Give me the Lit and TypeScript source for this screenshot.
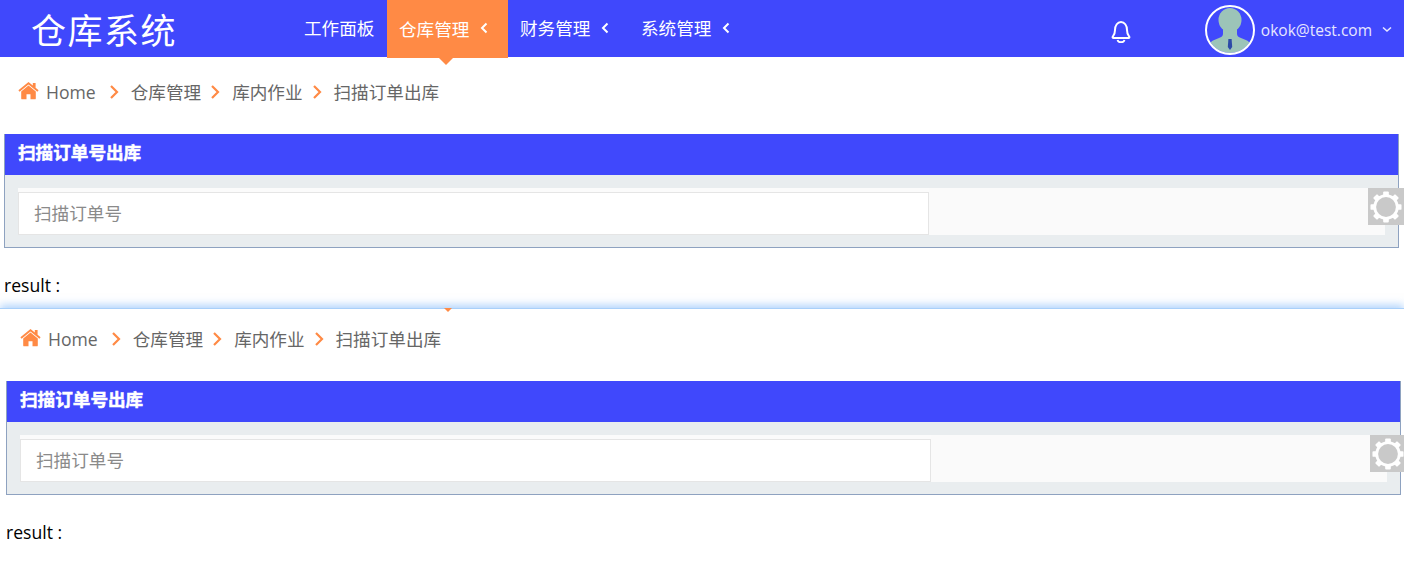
import { LitElement, html, css, svg } from "lit";
import { customElement } from "lit/decorators.js";

const chevronRight = html`<svg class="crumb-sep" viewBox="0 0 10 16" width="10" height="16"><path d="M2 2l6 6-6 6" fill="none" stroke="#ff8a45" stroke-width="2.2"/></svg>`;

const gearTeeth = (() => {
  const teeth = [];
  for (let i = 0; i < 8; i++) {
    teeth.push(svg`<rect x="14" y="0.500" width="6" height="7" rx="1" fill="#fff" transform="rotate(${i * 45} 17 17)"/>`);
  }
  return teeth;
})();

@customElement("page-content")
export class PageContent extends LitElement {
  static styles = css`
    :host { display: block; padding-left: 4px; font-family: "Open Sans", "Noto Sans CJK SC", sans-serif; }
    .crumbs { display: flex; align-items: center; height: 70px; margin-bottom: 7px; padding-left: 14px; font-size: 17.6px; color: #666; }
    .home { margin-right: 7px; margin-top: -2px; }
    .crumbs .t { line-height: 24px; }
    .crumb-sep { margin: 0 12px 0 9px; }
    .crumb-sep.s0 { margin: 0 12px 0 13px; }
    .panel { margin-right: 5px; border: 1px solid #8ea2c0; border-top: 0; background: #e9edef; }
    .head { height: 41px; background: #4048fc; color: #fff; font-size: 17.6px; font-weight: 700; -webkit-text-stroke: 0.5px #fff; line-height: 36px; padding-left: 13px; }
    .body { padding: 13px 13px 12px; }
    .row { position: relative; background: #fafafa; padding-top: 4px; height: 43px; }
    .row::before { content: ""; position: absolute; left: 0; top: 0; width: 66.67%; height: 4px; background: #fbfbfb; }
    .input { box-sizing: border-box; width: 66.67%; height: 43px; background: #fff; border: 1px solid #e5e5e5; padding-left: 15px; font-size: 17.6px; line-height: 41px; color: #8a8a8a; }
    .gear { position: absolute; right: -19px; top: 0; width: 36px; height: 37px; background: #c9c9c9; display: flex; align-items: center; justify-content: center; }
    .result { margin-top: 25px; height: 24px; font-size: 17.6px; line-height: 24px; color: #000; }
  `;
  render() {
    return html`
      <div class="crumbs">
        <svg class="home" width="21" height="18" viewBox="0 0 21 18"><path fill="#ff8a45" d="M10.5 3.6 3.2 9.6V16.4c0 .5.4.9.9.9h4.4v-5h4v5h4.4c.5 0 .9-.4.9-.9V9.6z"/><path fill="#ff8a45" d="M20.6 8.3 17.6 5.8V1h-2.8v2.5L10.5 0 .4 8.3l1.2 1.5 8.9-7.3 8.9 7.3z"/></svg>
        <span class="t">Home</span>
        <svg class="crumb-sep s0" viewBox="0 0 10 16" width="10" height="16"><path d="M2 2l6 6-6 6" fill="none" stroke="#ff8a45" stroke-width="2.2"/></svg>
        <span class="t">仓库管理</span>
        ${chevronRight}
        <span class="t">库内作业</span>
        ${chevronRight}
        <span class="t">扫描订单出库</span>
      </div>
      <div class="panel">
        <div class="head">扫描订单号出库</div>
        <div class="body">
          <div class="row">
            <div class="input">扫描订单号</div>
            <div class="gear">
              <svg width="32" height="32" viewBox="0 0 34 34">
                ${gearTeeth}
                <circle cx="17" cy="17" r="13.500" fill="#fff"/>
                <circle cx="17" cy="17" r="10.500" fill="#c9c9c9"/>
              </svg>
            </div>
          </div>
        </div>
      </div>
      <div class="result">result :</div>
    `;
  }
}

@customElement("app-root")
export class AppRoot extends LitElement {
  static styles = css`
    :host { display: block; height: 585px; overflow: hidden; position: relative; background: #fff; font-family: "Open Sans", "Noto Sans CJK SC", sans-serif; }
    .bar { display: flex; height: 57px; background: #4048fc; color: #fff; }
    .logo { width: 260px; padding-left: 31px; margin-right: 1px; font-family: "Noto Sans CJK SC", sans-serif; font-weight: 400; font-size: 35px; letter-spacing: 1.5px; line-height: 58px; }
    .nav { display: flex; }
    .item { position: relative; box-sizing: border-box; display: flex; align-items: center; width: 121px; padding: 0 0 2px 12px; height: 57px; font-size: 17.6px; white-space: nowrap; }
    .item.plain { width: 95px; }
    .item svg { margin-left: 11px; width: 8px; height: 12px; }
    .item.active { background: #ff8a45; height: 58px; }
    .item.active::after { content: ""; position: absolute; left: 52px; top: 58px; border: 7px solid transparent; border-top-color: #ff8a45; border-bottom: 0; }
    .right { margin-left: auto; display: flex; align-items: center; }
    .bell { margin-right: 73px; margin-top: 7px; }
    .avatar { margin-right: 6px; margin-top: 3px; }
    .email { font-size: 15.5px; color: #e6e6ff; margin-top: 2px; }
    .caret { margin: 2px 12px 0 10px; }
    .wrap { height: 251px; }
    .layer { position: relative; border-top: 1px solid #a9d0fa; box-shadow: 0 -3px 8px rgba(100,170,250,.5); background: #fff; }
    .second { margin: -5px -2px 0 2px; height: 300px; }
    .peek { position: absolute; left: 444px; top: -1px; border: 4px solid transparent; border-top-color: #ff8a45; border-bottom: 0; }
  `;
  render() {
    const left = html`<svg viewBox="0 0 8 12"><path d="M6.5 1.5 2 6l4.500 4.500" fill="none" stroke="#fff" stroke-width="2"/></svg>`;
    return html`
      <div class="bar">
        <div class="logo">仓库系统</div>
        <div class="nav">
          <div class="item plain">工作面板</div>
          <div class="item active">仓库管理${left}</div>
          <div class="item">财务管理${left}</div>
          <div class="item">系统管理${left}</div>
        </div>
        <div class="right">
          <svg class="bell" width="22" height="24" viewBox="0 0 22 24"><path d="M2.800 16.700c1.600-1.800 2.200-3.400 2.200-6.700C5 5.300 7.600 2 11 2s6 3.300 6 8c0 3.300.6 4.900 2.200 6.700.5.700.2 1.300-.7 1.300H3.500c-.9 0-1.200-.6-.7-1.300z" fill="none" stroke="#fff" stroke-width="2"/><path d="M7.500 20c.4 1.400 1.900 2.200 3.500 2.200s3.100-.8 3.500-2.200" fill="none" stroke="#fff" stroke-width="1.800"/></svg>
          <svg class="avatar" width="50" height="50" viewBox="0 0 50 50">
            <defs>
              <clipPath id="c"><circle cx="25" cy="25" r="23"/></clipPath>
              <filter id="b" x="-10%" y="-10%" width="120%" height="120%"><feGaussianBlur stdDeviation="0.500"/></filter>
            </defs>
            <g clip-path="url(#c)">
              <g fill="#9cc4b8" filter="url(#b)">
                <ellipse cx="25" cy="15" rx="11.500" ry="12"/>
                <path d="M18 22h14v7c0 2 1.500 3 4 4l6 2.500c3 1.500 4 5 4 14.500H4c0-9.500 1-13 4-14.500l6-2.500c2.500-1 4-2 4-4z"/>
              </g>
              <path d="M23.400 34h3.200l.6 8-2.200 3-2.200-3z" fill="#2c4aa8"/>
            </g>
            <circle cx="25" cy="25" r="24" fill="none" stroke="#fff" stroke-width="2"/>
          </svg>
          <span class="email">okok@test.com</span>
          <svg class="caret" width="10" height="7" viewBox="0 0 10 7"><path d="M1 1.500 5 5l4-3.500" fill="none" stroke="#e6e6ff" stroke-width="1.600"/></svg>
        </div>
      </div>
      <div class="wrap"><page-content></page-content></div>
      <div class="layer">
        <div class="peek"></div>
        <div class="second"><page-content></page-content></div>
      </div>
    `;
  }
}
